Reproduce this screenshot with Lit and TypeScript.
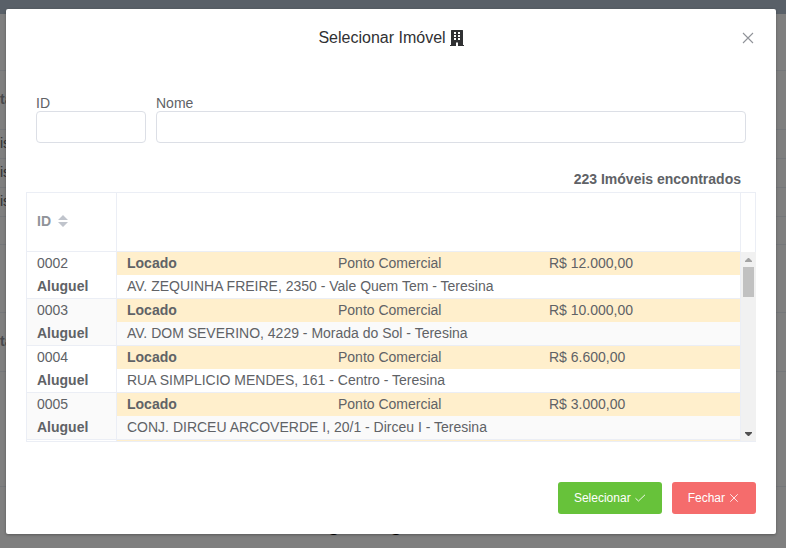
import { LitElement, html, css } from "lit";
import { customElement, state } from "lit/decorators.js";
import { classMap } from "lit/directives/class-map.js";

interface Property {
  id: string;
  deal: string;
  status: string;
  kind: string;
  price: string;
  address: string;
}

const PROPERTIES: Property[] = [
  { id: "0002", deal: "Aluguel", status: "Locado", kind: "Ponto Comercial", price: "R$ 12.000,00", address: "AV. ZEQUINHA FREIRE, 2350 - Vale Quem Tem - Teresina" },
  { id: "0003", deal: "Aluguel", status: "Locado", kind: "Ponto Comercial", price: "R$ 10.000,00", address: "AV. DOM SEVERINO, 4229 - Morada do Sol - Teresina" },
  { id: "0004", deal: "Aluguel", status: "Locado", kind: "Ponto Comercial", price: "R$ 6.600,00", address: "RUA SIMPLICIO MENDES, 161 - Centro - Teresina" },
  { id: "0005", deal: "Aluguel", status: "Locado", kind: "Ponto Comercial", price: "R$ 3.000,00", address: "CONJ. DIRCEU ARCOVERDE I, 20/1 - Dirceu I - Teresina" },
];

/* The page that lies dimmed behind the dialog. */
@customElement("backdrop-page")
class BackdropPage extends LitElement {
  static styles = css`
    :host {
      position: absolute;
      inset: 0;
      overflow: hidden;
      background: #fff;
      color: #606266;
      font-size: 14px;
    }
    .bar { height: 14px; background: #b3c0d1; }
    .row {
      box-sizing: border-box;
      height: 29px;
      line-height: 26px;
      border-bottom: 1px solid #ebeef5;
    }
    .tall { height: 59px; line-height: 56px; }
    .space { height: 57px; }
    .short { height: 28px; }
    .gap { height: 68px; }
    .wide { height: 115px; }
    .head { color: #909399; font-weight: bold; }
    .title {
      display: flex;
      justify-content: center;
      gap: 50px;
      margin-right: 56px;
      line-height: 24px;
      padding-top: 25px;
      font-size: 20px;
      font-weight: bold;
      color: #000;
    }
    .shade { position: absolute; inset: 0; background: rgba(0, 0, 0, 0.5); }
  `;

  render() {
    return html`
      <div class="bar"></div>
      <div class="row space"></div>
      <div class="row tall head">ta</div>
      <div class="row">is</div>
      <div class="row">is</div>
      <div class="row">is</div>
      <div class="row short"></div>
      <div class="row gap"></div>
      <div class="row tall head">ta</div>
      <div class="row wide"></div>
      <div class="title"><span>g</span><span>g</span></div>
      <div class="shade"></div>
    `;
  }
}

@customElement("app-root")
class AppRoot extends LitElement {
  @state() private open = true;
  @state() private selected = "";

  static styles = css`
    :host {
      display: block;
      position: relative;
      box-sizing: border-box;
      min-height: 100vh;
      padding: 9px 10px 14px 6px;
      font-family: "Liberation Sans", Arial, sans-serif;
      font-size: 14px;
      color: #606266;
    }
    .dialog {
      position: relative;
      background: #fff;
      border-radius: 2px;
      box-shadow: 0 1px 3px rgba(0, 0, 0, 0.3);
    }
    .header {
      display: grid;
      grid-template-columns: 16px 1fr 16px;
      align-items: center;
      padding: 16px 20px 0;
      height: 25px;
    }
    .title {
      grid-column: 2;
      display: flex;
      align-items: center;
      justify-content: center;
      gap: 4px;
      margin: 0;
      padding-top: 1px;
      font-size: 16px;
      line-height: 24px;
      font-weight: normal;
      color: #303133;
    }
    button { font-family: inherit; border: 0; cursor: pointer; }
    .close {
      display: flex;
      justify-content: center;
      padding: 0;
      background: none;
      color: #909399;
    }
    svg { display: block; }
    .filters {
      display: grid;
      grid-template-columns: 110px 1fr;
      gap: 10px;
      padding: 46px 30px 0;
    }
    label { display: block; line-height: 15px; }
    input {
      display: block;
      box-sizing: border-box;
      width: 100%;
      height: 32px;
      padding: 0 10px;
      border: 1px solid #dcdfe6;
      border-radius: 4px;
      background: #fff;
      color: #606266;
      font: inherit;
      outline: none;
    }
    .count {
      margin: 0;
      padding: 28px 35px 5px 20px;
      text-align: right;
      line-height: 16px;
      font-weight: bold;
    }
    .grid {
      margin: 0 20px;
      border: 1px solid #ebeef5;
    }
    .head, .body { display: flex; }
    .gutter { flex: none; width: 14px; }
    table {
      flex: 1;
      width: 100%;
      table-layout: fixed;
      border-collapse: separate;
      border-spacing: 0;
    }
    th, td {
      padding: 0;
      text-align: left;
      border-right: 1px solid #ebeef5;
      border-bottom: 1px solid #ebeef5;
    }
    .id-col { width: 90px; }
    th { height: 56px; padding-bottom: 2px; color: #909399; }
    .sort {
      display: flex;
      align-items: center;
      gap: 7px;
      padding: 0 10px;
      background: none;
      color: inherit;
      font-size: 14px;
      font-weight: bold;
    }
    .viewport {
      flex: 1;
      height: 189px;
      overflow-y: auto;
      scrollbar-width: none;
    }
    .line { line-height: 23px; }
    .line span { padding-left: 10px; }
    .facts {
      display: grid;
      grid-template-columns: repeat(3, calc((100% + 10px) / 3));
      overflow: hidden;
      background: #ffefcc;
    }
    .strong { font-weight: bold; }
    .striped { background: #fafafa; }
    .track {
      flex: none;
      display: flex;
      flex-direction: column;
      align-items: center;
      box-sizing: border-box;
      width: 15px;
      margin-right: -1px;
      background: #f1f1f1;
    }
    .arrow { height: 15px; display: flex; align-items: center; }
    .thumb { width: 11px; height: 30px; background: #c1c1c1; }
    .arrow.down { margin-top: auto; }
    .footer {
      display: flex;
      justify-content: flex-end;
      gap: 10px;
      padding: 40px 20px 20px;
    }
    .action {
      display: flex;
      align-items: center;
      justify-content: center;
      gap: 3px;
      height: 32px;
      padding: 0 16px;
      border-radius: 3px;
      color: #fff;
      font-size: 12px;
    }
    .confirm { background: #67c23a; }
    .cancel { background: #f56c6c; }
  `;

  private close() {
    this.open = false;
  }

  private cross(size: number) {
    return html`<svg width=${size} height=${size} viewBox="0 0 16 16" fill="none" stroke="currentColor" stroke-width="1.1" aria-hidden="true">
      <path d="M3 3 13 13M13 3 3 13" /></svg>`;
  }

  private row(item: Property, index: number) {
    const classes = { striped: index % 2 === 1 };
    return html`
      <tr class=${classMap(classes)} @click=${() => (this.selected = item.id)}>
        <td>
          <div class="line"><span>${item.id}</span></div>
          <div class="line strong"><span>${item.deal}</span></div>
        </td>
        <td>
          <div class="line facts">
            <span class="strong">${item.status}</span><span>${item.kind}</span><span>${item.price}</span>
          </div>
          <div class="line"><span>${item.address}</span></div>
        </td>
      </tr>`;
  }

  private dialog() {
    return html`
      <div class="dialog" role="dialog" aria-modal="true" aria-labelledby="title">
        <div class="header">
          <h1 class="title" id="title">
            Selecionar Imóvel
            <svg width="14" height="16" viewBox="0 0 14 16" aria-hidden="true">
              <path fill="currentColor" fill-rule="evenodd" d="M1 .5Q1 0 1.5 0H12.500Q13 0 13 .5V15H14V16H8V12.500H6V16H0V15H1ZM4 2V4H6V2ZM8 2V4H10V2ZM4 5V7H6V5ZM8 5V7H10V5ZM4 8V10H6V8ZM8 8V10H10V8Z" />
            </svg>
          </h1>
          <button class="close" aria-label="Fechar" @click=${this.close}>${this.cross(16)}</button>
        </div>

        <div class="filters">
          <div><label for="id">ID</label><input id="id" type="text" /></div>
          <div><label for="name">Nome</label><input id="name" type="text" /></div>
        </div>

        <p class="count">223 Imóveis encontrados</p>

        <div class="grid">
          <div class="head">
            <table>
              <colgroup><col class="id-col" /><col /></colgroup>
              <thead>
                <tr>
                  <th>
                    <button class="sort">ID
                      <svg width="10" height="12" viewBox="0 0 10 12" fill="#c0c4cc" aria-hidden="true">
                        <path d="M5 0 10 5H0ZM0 7H10L5 12Z" />
                      </svg>
                    </button>
                  </th>
                  <th></th>
                </tr>
              </thead>
            </table>
            <div class="gutter"></div>
          </div>
          <div class="body">
            <div class="viewport">
              <table>
                <colgroup><col class="id-col" /><col /></colgroup>
                <tbody>
                  ${PROPERTIES.map((item, index) => this.row(item, index))}
                  <tr><td><div class="line"></div></td><td><div class="line facts"><span>&nbsp;</span></div></td></tr>
                </tbody>
              </table>
            </div>
            <div class="track" aria-hidden="true">
              <div class="arrow"><svg width="7" height="4" viewBox="0 0 7 4"><path fill="#a3a3a3" d="M3 0H4L7 3V4H0V3Z" /></svg></div>
              <div class="thumb"></div>
              <div class="arrow down"><svg width="7" height="4" viewBox="0 0 7 4"><path fill="#505050" d="M0 0H7V1L4 4H3L0 1Z" /></svg></div>
            </div>
          </div>
        </div>

        <div class="footer">
          <button class="action confirm" @click=${this.close}>Selecionar
            <svg width="12" height="12" viewBox="0 0 12 12" fill="none" stroke="currentColor" stroke-width="0.9" aria-hidden="true"><path d="M1.500 6.300 4.500 9 11 2.800" /></svg>
          </button>
          <button class="action cancel" @click=${this.close}>Fechar ${this.cross(12)}</button>
        </div>
      </div>`;
  }

  render() {
    return html`
      <backdrop-page aria-hidden="true"></backdrop-page>
      ${this.open ? this.dialog() : ""}
    `;
  }
}
